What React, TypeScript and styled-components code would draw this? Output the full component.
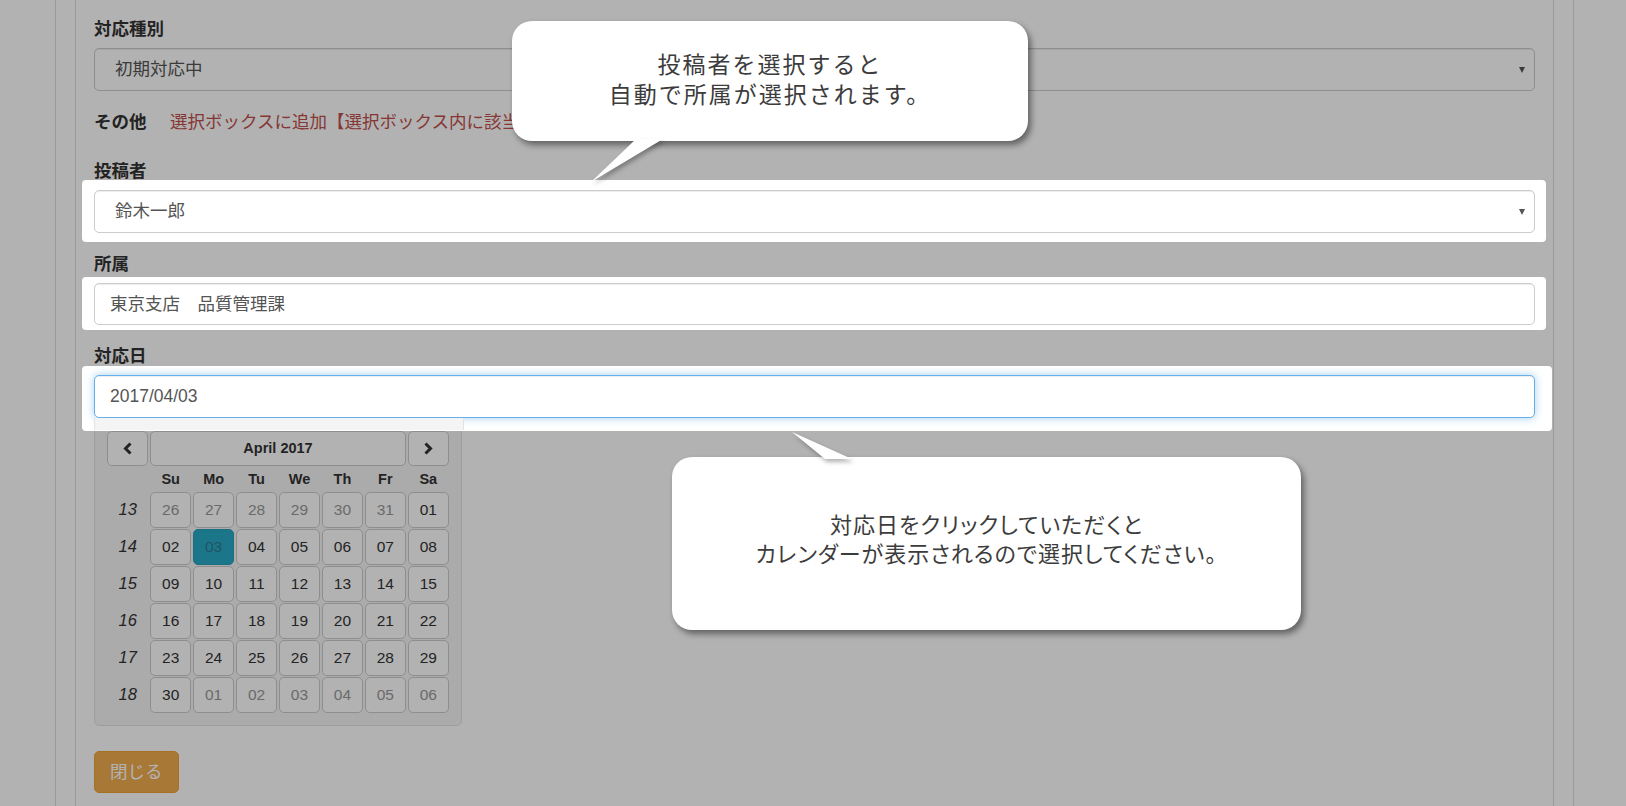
import React from 'react';
import styled, { createGlobalStyle, css } from 'styled-components';

const GlobalStyle = createGlobalStyle`
  html, body {
    margin: 0;
    padding: 0;
    background: #fff;
  }
  body {
    font-family: "Liberation Sans", "Noto Sans CJK JP", sans-serif;
    font-size: 17.5px;
    line-height: 1.42857;
    color: #333;
  }
  * {
    box-sizing: border-box;
  }
`;

const Screen = styled.div`
  position: relative;
  width: 1626px;
  height: 806px;
  overflow: hidden;
`;

const Frame = styled.div`
  margin-left: 55px;
  width: 1519px;
  height: 100%;
  border-left: 1px solid #ddd;
  border-right: 1px solid #ddd;
  padding: 0 19px;
`;

const Panel = styled.div`
  height: 100%;
  border-left: 1px solid #ddd;
  border-right: 1px solid #ddd;
  padding: 17px 18px 0;
`;

const FormGroup = styled.div`
  margin-bottom: 18.75px;
`;

const Label = styled.label`
  display: block;
  font-weight: bold;
  line-height: 25px;
  margin-bottom: 6.25px;
  color: #333;
`;

const OtherRow = styled.div`
  display: flex;
  align-items: baseline;
  line-height: 25px;
  margin-bottom: 24.5px;
`;

const InlineLabel = styled.span`
  font-weight: bold;
  color: #333;
`;

const DangerLink = styled.a`
  margin-left: 23.5px;
  color: #c0504d;
  white-space: nowrap;
`;

const controlBase = css`
  height: 42.5px;
  border: 1px solid #ccc;
  border-radius: 5px;
  background: #fff;
  color: #555;
  display: flex;
  align-items: center;
  box-shadow: inset 0 1px 1px rgba(0, 0, 0, 0.075);
`;

const SelectBox = styled.div`
  ${controlBase};
  justify-content: space-between;
  padding: 0 9px 0 20px;
`;

const Caret = styled.span`
  width: 0;
  height: 0;
  border-left: 3.5px solid transparent;
  border-right: 3.5px solid transparent;
  border-top: 6.5px solid #555;
`;

const TextInput = styled.div<{ $focused?: boolean }>`
  ${controlBase};
  padding: 0 15px;
  ${(p) =>
    p.$focused &&
    css`
      border-color: #66afe9;
      box-shadow: inset 0 1px 1px rgba(0, 0, 0, 0.075), 0 0 8px rgba(102, 175, 233, 0.6);
    `}
`;

/* raised above the overlay, with the white tour frame behind it */
const Spotlight = styled.div<{ $inset: string; $strip?: boolean }>`
  position: relative;
  z-index: 11;

  &::before {
    content: '';
    position: absolute;
    inset: ${(p) => p.$inset};
    background: #fff;
    border-radius: 4px;
    z-index: -1;
  }

  ${(p) =>
    p.$strip &&
    css`
      &::after {
        content: '';
        position: absolute;
        left: 0;
        top: 100%;
        width: 368px;
        height: 12.5px;
        background: #f4f4f4;
        border-left: 1px solid #e3e3e3;
        border-right: 1px solid #e3e3e3;
      }
    `}
`;

const Well = styled.div`
  width: 368px;
  padding: 12px;
  background: #f5f5f5;
  border: 1px solid #e3e3e3;
  border-radius: 5px;
  box-shadow: inset 0 1px 1px rgba(0, 0, 0, 0.05);
  margin-bottom: 25.5px;
`;

const CalendarGrid = styled.div`
  display: grid;
  grid-template-columns: repeat(8, 1fr);
  grid-template-rows: 35px 23.5px repeat(6, 35.5px);
  gap: 1.5px;
`;

const cellBox = css`
  border: 1px solid #ccc;
  border-radius: 5px;
  background: #fff;
  display: flex;
  align-items: center;
  justify-content: center;
`;

const NavButton = styled.div`
  ${cellBox};
  color: #333;
`;

const SwitchButton = styled.div`
  ${cellBox};
  grid-column: span 6;
  font-size: 14.5px;
  font-weight: bold;
  color: #333;
`;

const DowCell = styled.div`
  display: flex;
  align-items: center;
  justify-content: center;
  font-size: 14.5px;
  font-weight: bold;
  color: #333;
`;

const WeekNo = styled.div`
  display: flex;
  align-items: center;
  justify-content: center;
  font-size: 16.5px;
  font-style: italic;
  color: #333;
`;

const DayCell = styled.div<{ $muted?: boolean; $active?: boolean }>`
  ${cellBox};
  font-size: 15.5px;
  color: ${(p) => (p.$muted ? '#999' : '#333')};
  ${(p) =>
    p.$active &&
    css`
      background: #29aac6;
      border-color: #269fba;
      color: #2d7a8f;
    `}
`;

const CloseButton = styled.button`
  font-family: "Liberation Sans", "Noto Sans CJK JP", sans-serif;
  font-size: 17.5px;
  line-height: 25px;
  padding: 7.5px 15px;
  color: #fff;
  background: #f0ad4e;
  border: 1px solid #eea236;
  border-radius: 5px;
`;

const Overlay = styled.div`
  position: absolute;
  inset: 0;
  background: rgba(0, 0, 0, 0.3);
  z-index: 10;
`;

const Callout = styled.div<{ $x: number; $y: number; $w: number; $h: number; $pt: number }>`
  position: absolute;
  z-index: 12;
  left: ${(p) => p.$x}px;
  top: ${(p) => p.$y}px;
  width: ${(p) => p.$w}px;
  height: ${(p) => p.$h}px;
  padding-top: ${(p) => p.$pt}px;
  background: #fff;
  border-radius: 20px;
  box-shadow: 3px 4px 6px rgba(0, 0, 0, 0.45);
  text-align: center;
  color: #3c3c3c;
  font-family: "Noto Sans CJK JP", sans-serif;
`;

const CalloutText = styled.div<{ $size: number; $lh: number; $spacing: number; $palt?: boolean }>`
  position: relative;
  z-index: 1;
  font-size: ${(p) => p.$size}px;
  line-height: ${(p) => p.$lh}px;
  letter-spacing: ${(p) => p.$spacing}px;
  ${(p) => p.$palt && 'font-feature-settings: "palt";'}
`;

const Tail = styled.svg`
  position: absolute;
  left: 0;
  top: 0;
  width: 100%;
  height: 100%;
  overflow: visible;
  pointer-events: none;

  polygon {
    fill: #fff;
    filter: drop-shadow(2px 3px 2px rgba(0, 0, 0, 0.3));
  }
`;

const Chevron: React.FC<{ dir: 'left' | 'right' }> = ({ dir }) => (
  <svg width="10" height="13" viewBox="0 0 10 13">
    <polyline
      points={dir === 'left' ? '7.5,1.5 2.5,6.5 7.5,11.5' : '2.5,1.5 7.5,6.5 2.5,11.5'}
      fill="none"
      stroke="#333"
      strokeWidth="3"
    />
  </svg>
);

const dows = ['Su', 'Mo', 'Tu', 'We', 'Th', 'Fr', 'Sa'];

const weeks: { no: number; days: { d: string; muted?: boolean; active?: boolean }[] }[] = [
  {
    no: 13,
    days: [
      { d: '26', muted: true },
      { d: '27', muted: true },
      { d: '28', muted: true },
      { d: '29', muted: true },
      { d: '30', muted: true },
      { d: '31', muted: true },
      { d: '01' },
    ],
  },
  { no: 14, days: [{ d: '02' }, { d: '03', active: true }, { d: '04' }, { d: '05' }, { d: '06' }, { d: '07' }, { d: '08' }] },
  { no: 15, days: ['09', '10', '11', '12', '13', '14', '15'].map((d) => ({ d })) },
  { no: 16, days: ['16', '17', '18', '19', '20', '21', '22'].map((d) => ({ d })) },
  { no: 17, days: ['23', '24', '25', '26', '27', '28', '29'].map((d) => ({ d })) },
  {
    no: 18,
    days: [
      { d: '30' },
      { d: '01', muted: true },
      { d: '02', muted: true },
      { d: '03', muted: true },
      { d: '04', muted: true },
      { d: '05', muted: true },
      { d: '06', muted: true },
    ],
  },
];

const App: React.FC = () => {
  return (
    <Screen>
      <GlobalStyle />
      <Frame>
        <Panel>
          <FormGroup>
            <Label>対応種別</Label>
            <SelectBox>
              初期対応中
              <Caret />
            </SelectBox>
          </FormGroup>

          <OtherRow>
            <InlineLabel>その他</InlineLabel>
            <DangerLink>選択ボックスに追加【選択ボックス内に該当なし】</DangerLink>
          </OtherRow>

          <FormGroup>
            <Label>投稿者</Label>
            <Spotlight $inset="-10px -11px -9px -12px">
              <SelectBox>
                鈴木一郎
                <Caret />
              </SelectBox>
            </Spotlight>
          </FormGroup>

          <FormGroup>
            <Label>所属</Label>
            <Spotlight $inset="-6px -11px -5px -12px">
              <TextInput>東京支店　品質管理課</TextInput>
            </Spotlight>
          </FormGroup>

          <div>
            <Label>対応日</Label>
            <Spotlight $inset="-9px -17px -13px -12px" $strip>
              <TextInput $focused>2017/04/03</TextInput>
            </Spotlight>
            <Well>
              <CalendarGrid>
                <NavButton>
                  <Chevron dir="left" />
                </NavButton>
                <SwitchButton>April 2017</SwitchButton>
                <NavButton>
                  <Chevron dir="right" />
                </NavButton>

                <div />
                {dows.map((d) => (
                  <DowCell key={d}>{d}</DowCell>
                ))}

                {weeks.map((w) => (
                  <React.Fragment key={w.no}>
                    <WeekNo>{w.no}</WeekNo>
                    {w.days.map((day, i) => (
                      <DayCell key={i} $muted={day.muted} $active={day.active}>
                        {day.d}
                      </DayCell>
                    ))}
                  </React.Fragment>
                ))}
              </CalendarGrid>
            </Well>
          </div>

          <CloseButton>閉じる</CloseButton>
        </Panel>
      </Frame>

      <Overlay />

      <Callout $x={512} $y={21} $w={516} $h={120} $pt={27}>
        <CalloutText $size={23} $lh={30} $spacing={2}>
          投稿者を選択すると
          <br />
          自動で所属が選択されます。
        </CalloutText>
        <Tail>
          <polygon points="124,118 151,118 79,161" />
        </Tail>
      </Callout>

      <Callout $x={672} $y={457} $w={629} $h={173} $pt={52}>
        <CalloutText $size={22} $lh={29} $spacing={1} $palt>
          対応日をクリックしていただくと
          <br />
          カレンダーが表示されるので選択してください。
        </CalloutText>
        <Tail>
          <polygon points="120,-25 153,2 180,2" />
        </Tail>
      </Callout>
    </Screen>
  );
};

export default App;
